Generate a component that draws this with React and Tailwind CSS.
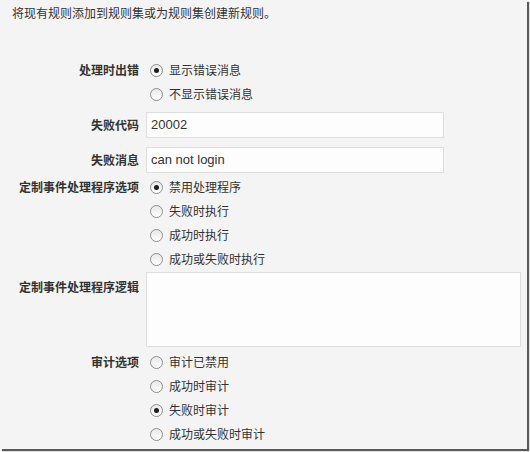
import React from "react";

const cjk = { fontFamily: '"Noto Sans CJK SC", "Liberation Sans", sans-serif' };

const Radio = ({ label, checked }) => (
  <label className="flex h-[24px] items-center text-[12px] text-[#333]">
    <span className="ml-[4px] mr-[6px] flex h-[13px] w-[13px] items-center justify-center rounded-full border border-[#8d8d8d] bg-gradient-to-b from-[#e8e8e8] to-white">
      {checked && <span className="h-[5px] w-[5px] rounded-full bg-[#1e1e1e]" />}
    </span>
    {label}
  </label>
);

const Label = ({ children, className = "" }) => (
  <div className={`w-[140px] shrink-0 pr-[1px] text-right text-[12px] font-bold text-[#333] ${className}`}>
    {children}
  </div>
);

const RadioRow = ({ label, options, selected, className = "" }) => (
  <div className={`flex items-start ${className}`}>
    <Label className="leading-[24px]">{label}</Label>
    <div className="ml-[6px] flex flex-col">
      {options.map((o) => (
        <Radio key={o} label={o} checked={o === selected} />
      ))}
    </div>
  </div>
);

const InputRow = ({ label, value, className = "" }) => (
  <div className={`flex items-center ${className}`}>
    <Label className="leading-[26px]">{label}</Label>
    <div
      className="ml-[6px] flex h-[26px] w-[298px] items-center border border-[#dedede] bg-[#fdfdfd] px-[4px] text-[13px] text-[#333]"
      style={{ fontFamily: '"Liberation Sans", Arial, sans-serif' }}
    >
      {value}
    </div>
  </div>
);

export default function App() {
  return (
    <div className="h-[452px] w-[530px] bg-white" style={cjk}>
      <div className="h-[449px] w-[527px] overflow-hidden bg-[#f4f4f4] shadow-[2px_2px_1px_rgba(0,0,0,0.65)]">
        <div className="pl-[12px] pt-px text-[12px] leading-[24px] text-[#333]">
          将现有规则添加到规则集或为规则集创建新规则。
        </div>

        <RadioRow
          className="mt-[33px]"
          label="处理时出错"
          options={["显示错误消息", "不显示错误消息"]}
          selected="显示错误消息"
        />

        <InputRow className="mt-[6px]" label="失败代码" value="20002" />
        <InputRow className="mt-[9px]" label="失败消息" value="can not login" />

        <RadioRow
          className="mt-[2px]"
          label="定制事件处理程序选项"
          options={["禁用处理程序", "失败时执行", "成功时执行", "成功或失败时执行"]}
          selected="禁用处理程序"
        />

        <div className="mt-px flex items-start">
          <Label className="pt-[3px] leading-[24px]">定制事件处理程序逻辑</Label>
          <div className="ml-[6px] h-[75px] w-[375px] border border-[#dedede] bg-[#fdfdfd]" />
        </div>

        <RadioRow
          className="mt-[3px]"
          label="审计选项"
          options={["审计已禁用", "成功时审计", "失败时审计", "成功或失败时审计"]}
          selected="失败时审计"
        />
      </div>
    </div>
  );
}
